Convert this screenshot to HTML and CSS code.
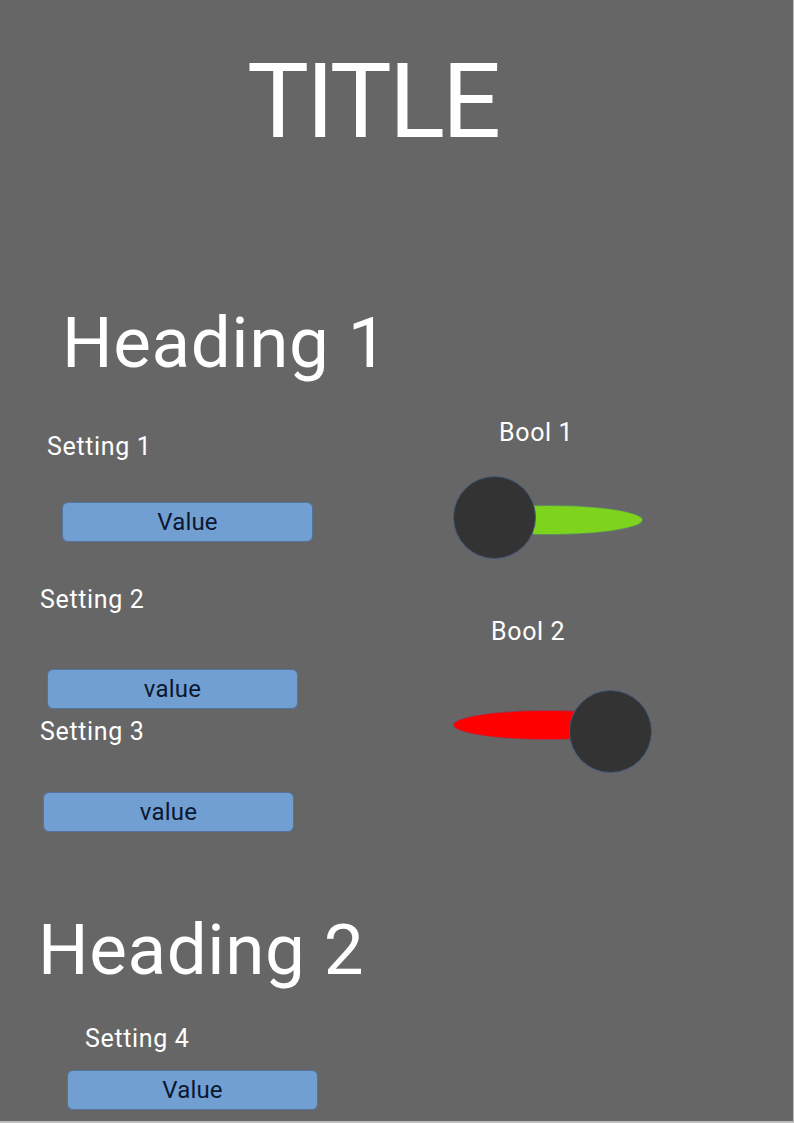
FILE: index.html
```html
<!DOCTYPE html>
<html lang="en">
<head>
<meta charset="utf-8">
<title>Settings</title>
<link rel="stylesheet" href="styles.css">
</head>
<body>
<div class="page">
  <h1 class="title">TITLE</h1>
  <h2 class="heading heading-1">Heading 1</h2>
  <div class="row">
    <div class="col-left">
      <div class="label s1">Setting 1</div>
      <div class="field f1">Value</div>
      <div class="label s2">Setting 2</div>
      <div class="field f2">value</div>
      <div class="label s3">Setting 3</div>
      <div class="field f3">value</div>
    </div>
    <div class="col-right">
      <div class="label b1">Bool 1</div>
      <div class="toggle on">
        <div class="track"></div>
        <div class="knob"></div>
      </div>
      <div class="label b2">Bool 2</div>
      <div class="toggle off">
        <div class="track"></div>
        <div class="knob"></div>
      </div>
    </div>
  </div>
  <h2 class="heading heading-2">Heading 2</h2>
  <div class="label s4">Setting 4</div>
  <div class="field f4">Value</div>
</div>
</body>
</html>
```

FILE: styles.css
```css
html, body {
  margin: 0;
  padding: 0;
  background: #bdbdbd;
}

.page {
  width: 793px;
  height: 1121px;
  background: #666666;
  overflow: hidden;
  font-family: Roboto, "Liberation Sans", sans-serif;
  color: #ffffff;
}

.title {
  margin: 50px 0 0 0;
  padding-right: 48px;
  font-size: 104px;
  line-height: 104px;
  font-weight: 400;
  text-align: center;
  letter-spacing: -3px;
}

.heading {
  margin: 0;
  font-size: 71px;
  line-height: 70px;
  font-weight: 400;
  letter-spacing: 0.6px;
}

.heading-1 {
  margin-top: 154px;
  margin-left: 62px;
}

.heading-2 {
  margin-top: 83px;
  margin-left: 38px;
}

.row {
  display: flex;
}

.col-left {
  width: 420px;
  display: flex;
  flex-direction: column;
  align-items: flex-start;
}

.col-right {
  display: flex;
  flex-direction: column;
  align-items: flex-start;
}

.label {
  font-size: 25px;
  line-height: 25px;
  letter-spacing: 0.65px;
}

.field {
  box-sizing: border-box;
  width: 251px;
  height: 40px;
  background: #729fd2;
  border: 1px solid #52739f;
  border-radius: 6px;
  display: flex;
  align-items: center;
  justify-content: center;
  font-size: 24px;
  color: #0b1830;
  letter-spacing: 0.2px;
}

.s1 { margin: 56px 0 0 47px; }
.f1 { margin: 43px 0 0 62px; }
.s2 { margin: 45px 0 0 40px; }
.f2 { margin: 57px 0 0 47px; }
.s3 { margin: 10px 0 0 40px; }
.f3 { margin: 48px 0 0 43px; }

.b1 { margin: 42px 0 0 79px; }
.b2 { margin: 60px 0 0 71px; }

.s4 { margin: 41px 0 0 85px; }
.f4 { margin: 19px 0 0 67px; }

.toggle {
  position: relative;
  width: 200px;
  height: 83px;
}

.toggle.on { margin: 31px 0 0 33px; }
.toggle.off { margin: 46px 0 0 33px; }

.track {
  position: absolute;
  left: 0;
  width: 190px;
  height: 30px;
  border-radius: 50%;
  box-sizing: border-box;
  border: 1px solid rgba(70, 100, 140, 0.6);
}

.toggle.on .track {
  top: 29px;
  background: #7ed31c;
}

.toggle.off .track {
  top: 20px;
  background: #ff0000;
}

.knob {
  position: absolute;
  top: 0;
  width: 83px;
  height: 83px;
  box-sizing: border-box;
  border-radius: 50%;
  background: #333333;
  border: 1.5px solid #43597a;
}

.toggle.on .knob { left: 0; }
.toggle.off .knob { left: 116px; }
```
